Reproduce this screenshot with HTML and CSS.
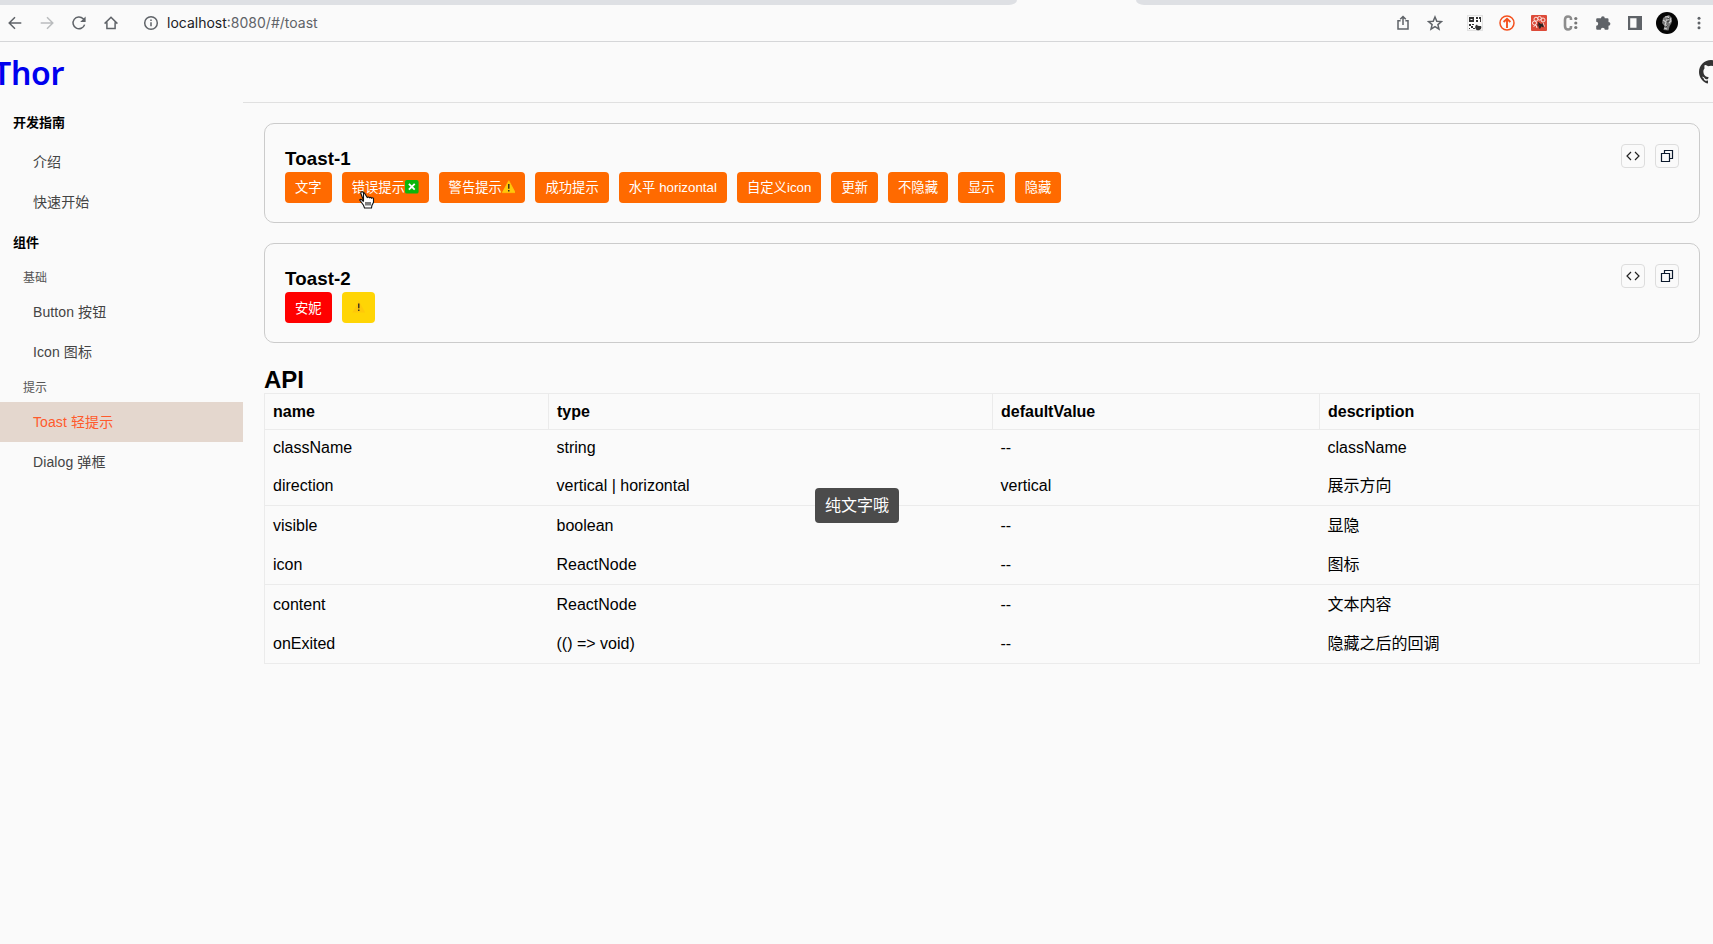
FILE: index.html
```html
<!DOCTYPE html>
<html lang="zh-CN">
	<head>
		<meta charset="utf-8">
		<title>Thor</title>
		<link rel="stylesheet" href="styles.css">
	</head>
	<body>
		<div class="browser">
			<div class="tab-strip">
				<div class="tabs-left"></div>
				<div class="tabs-right"></div>
			</div>
			<div class="toolbar">
				<svg class="tool" viewBox="0 0 16 16"><path d="M14.3 8H2.2M8 2.2 2.2 8 8 13.8"/></svg>
				<svg class="tool disabled" viewBox="0 0 16 16"><path d="M1.7 8h12.1M8 2.2 13.8 8 8 13.8"/></svg>
				<svg class="tool" viewBox="0 0 16 16"><path d="M13.6 9.6A5.9 5.9 0 1 1 12.2 3.8L13.6 5.4"/><path class="fill" d="M14.6 1.5v5.4H9.2z"/></svg>
				<svg class="tool" viewBox="0 0 16 16"><path d="M1.6 8.6 8 2.3l6.4 6.3M3.9 7.3v6.3h8.2V7.3"/></svg>
				<div class="address">
					<svg viewBox="0 0 16 16"><circle cx="8" cy="8" r="6.3"/><path d="M8 7.2v4M8 4.5v1.4"/></svg>
					<span class="host">localhost</span><span>:8080/#/toast</span>
				</div>
				<svg class="tool" viewBox="0 0 16 16"><path d="M5.6 5.7H3v8.4h10V5.7h-2.6M8 10V1.6M5.2 4.2 8 1.5l2.8 2.7"/></svg>
				<svg class="tool star" viewBox="0 0 16 16"><path d="m8 2 1.8 4.2 4.6.4-3.5 3 1.1 4.5L8 11.7l-4 2.4 1.1-4.5-3.5-3 4.6-.4z"/></svg>
				<svg class="tool" viewBox="0 0 16 16"><rect x=".5" y=".5" width="15" height="15" fill="#fff" stroke="#e2e2e2"/><path class="qr" d="M2 2h5v5H2zM9 2h2v2H9zM12 2h2v5h-1V4h-1zM9 5h2v2H9zM2 9h2v2H2zM5 9h2v1H5zM4 11h2v2H4zM2 13h1v1H2zM6 13h2v1H6zM10 9.500q0 2 4 1.500a3 3 0 1 1-4-1.500"/><path d="M3.500 4.500h2" stroke="#fff" stroke-width="1"/></svg>
				<svg class="tool" viewBox="0 0 16 16"><g stroke="#f4511e"><circle cx="8" cy="8" r="7"/><path stroke-width="1.900" d="M8 13V4M4.600 7 8 3.700 11.400 7"/></g></svg>
				<svg class="tool" viewBox="0 0 16 16"><rect width="16" height="16" rx="1" fill="#dd4b39" stroke="none"/><g stroke="#fbe3df" stroke-width="1"><circle cx="5" cy="4.200" r="2"/><circle cx="8.500" cy="3.300" r="1.800"/><circle cx="12" cy="5" r="2"/><circle cx="3.500" cy="8" r="2"/><path d="M2.500 11.500 5 10l1 3M13.500 11.500 12 8"/></g><path d="M7 7.500 12.500 12M6.500 10h5M8.500 13.500l3-5M7.500 12l5-2" stroke="#222" stroke-width="1.300"/></svg>
				<svg class="tool" viewBox="0 0 16 16"><path d="M8 5V4Q8 1.500 5 1.500T2 5v6q0 3.500 3 3.500T8 12v-1" stroke="#8d8d8d" stroke-width="2.600"/><g fill="#777" stroke="none"><circle cx="12.800" cy="3.500" r="1.600"/><circle cx="12.800" cy="8" r="1.600"/><circle cx="12.800" cy="12.500" r="1.600"/></g></svg>
				<svg class="tool" viewBox="0 0 16 16"><path class="fill" d="M6 3.200a1.900 1.900 0 0 1 3.800 0h2.700a1 1 0 0 1 1 1v2.700a1.900 1.900 0 0 1 0 3.800v3a1 1 0 0 1-1 1H9.800a2 2 0 0 0-4 0H2.200a1 1 0 0 1-1-1v-3a2 2 0 0 0 0-4V4.200a1 1 0 0 1 1-1z"/></svg>
				<svg class="tool" viewBox="0 0 16 16"><path class="fill" fill-rule="evenodd" d="M1 1h14v14H1zM3.200 3.200v9.600h6.300V3.200z"/></svg>
				<svg class="avatar" viewBox="0 0 22 22"><circle cx="11" cy="11" r="11" fill="#050505"/><path d="M9 4.500 13 3l3 3-.5 5-2 3.500-1 4-5-.5 1-4L6 11l1-5z" fill="#777"/><path d="m9 5 3-.5 1 2-3 2M7 8l3 2-1 3 3 1M14 6l1 3-2 2M8 16l3 1" fill="none" stroke="#d0d0d0" stroke-width="1.100"/><path d="m11 7 3-1M11 10l2-1M10 14.500l2-1" fill="none" stroke="#222" stroke-width=".8"/></svg>
				<svg class="tool" viewBox="0 0 16 16"><g class="fill"><circle cx="8" cy="3.200" r="1.500"/><circle cx="8" cy="8" r="1.500"/><circle cx="8" cy="12.800" r="1.500"/></g></svg>
			</div>
		</div>
		<div class="container">
			<header class="header">
				<a class="logo">Thor</a>
				<svg class="github" viewBox="0 0 16 16"><path d="M8 0C3.580 0 0 3.580 0 8c0 3.540 2.290 6.530 5.470 7.590.4.070.55-.17.55-.38 0-.19-.01-.82-.01-1.490-2.010.37-2.530-.49-2.690-.94-.09-.23-.48-.94-.82-1.130-.28-.15-.68-.52-.01-.53.63-.01 1.080.58 1.230.82.72 1.210 1.870.87 2.330.66.07-.52.28-.87.51-1.070-1.780-.2-3.640-.89-3.640-3.950 0-.87.31-1.590.82-2.150-.08-.2-.36-1.020.08-2.120 0 0 .67-.21 2.200.82a7.600 7.600 0 0 1 4 0c1.530-1.040 2.200-.82 2.200-.82.44 1.100.16 1.920.08 2.120.51.56.82 1.270.82 2.150 0 3.070-1.870 3.750-3.650 3.950.29.25.54.73.54 1.480 0 1.070-.01 1.930-.01 2.200 0 .21.15.46.55.38A8 8 0 0 0 8 0"/></svg>
			</header>
			<nav class="sidebar">
				<h4>开发指南</h4>
				<a>介绍</a>
				<a>快速开始</a>
				<h4>组件</h4>
				<h5>基础</h5>
				<a>Button 按钮</a>
				<a>Icon 图标</a>
				<h5>提示</h5>
				<a class="active">Toast 轻提示</a>
				<a>Dialog 弹框</a>
			</nav>
			<main class="content">
				<section class="card">
					<div class="card-main">
						<h3>Toast-1</h3>
						<div class="buttons">
							<button>文字</button>
							<button>错误提示<svg class="emoji" viewBox="0 0 14 14"><rect width="14" height="14" rx="2" fill="#0bb50b"/><path d="m4 4 6 6m0-6-6 6" stroke="#fff" stroke-width="1.900"/></svg>
								<svg class="cursor" viewBox="0 0 16 18"><path d="M4.500 10.500V2.200q0-1.500-1.400-1.500T1.800 2.300L4.200 8.500 4 10 2.500 8.600Q1.300 7.900.7 9l3.800 5.200 1 2.800h7l.4-2.500 1.600-3.200V7.500q-.7-1.200-1.900-.3-.7-1.300-2.200-.5-.9-1.200-2.200-.2L5.400 2Q4.400.3 2.900.9"/><path d="M7 11v3.500M9 11v3.500M11 11v3.500"/></svg></button>
							<button>警告提示<svg class="emoji" viewBox="0 0 14 14"><path d="M7 .7 13.600 13H.4z" fill="#ffc80a" stroke="#ffc80a" stroke-linejoin="round" stroke-width=".8"/><path d="M7 4v5M7 10.200v1.600" stroke="#222" stroke-width="1.400"/></svg></button>
							<button>成功提示</button>
							<button>水平 horizontal</button>
							<button>自定义icon</button>
							<button>更新</button>
							<button>不隐藏</button>
							<button>显示</button>
							<button>隐藏</button>
						</div>
					</div>
					<div class="actions">
						<span><svg viewBox="0 0 14 14"><path d="M5 3 1 7l4 4M9 3l4 4-4 4"/></svg></span>
						<span><svg class="copy" viewBox="0 0 14 14"><path d="M1.500 4.500h8v8h-8zM4.500 4.500v-3h8v8h-3"/></svg></span>
					</div>
				</section>
				<section class="card">
					<div class="card-main">
						<h3>Toast-2</h3>
						<div class="buttons">
							<button class="red">安妮</button>
							<button class="yellow"><svg class="emoji" viewBox="0 0 14 14"><path d="M7 .7 13.600 13H.4z" fill="#ffc80a"/><path d="M7 3.500v5M7 9.700v1.600" stroke="#222" stroke-width="1.300"/></svg></button>
						</div>
					</div>
					<div class="actions">
						<span><svg viewBox="0 0 14 14"><path d="M5 3 1 7l4 4M9 3l4 4-4 4"/></svg></span>
						<span><svg class="copy" viewBox="0 0 14 14"><path d="M1.500 4.500h8v8h-8zM4.500 4.500v-3h8v8h-3"/></svg></span>
					</div>
				</section>
				<h2>API</h2>
				<table class="api">
					<colgroup><col class="c-name"><col class="c-type"><col class="c-default"><col></colgroup>
					<thead>
						<tr><th>name</th><th>type</th><th>defaultValue</th><th>description</th></tr>
					</thead>
					<tbody>
						<tr class="first"><td>className</td><td>string</td><td>--</td><td>className</td></tr>
						<tr><td>direction</td><td>vertical | horizontal</td><td>vertical</td><td>展示方向</td></tr>
						<tr><td>visible</td><td>boolean</td><td>--</td><td>显隐</td></tr>
						<tr><td>icon</td><td>ReactNode</td><td>--</td><td>图标</td></tr>
						<tr><td>content</td><td>ReactNode</td><td>--</td><td>文本内容</td></tr>
						<tr><td>onExited</td><td>(() =&gt; void)</td><td>--</td><td>隐藏之后的回调</td></tr>
					</tbody>
				</table>
			</main>
		</div>
		<div class="toast">纯文字哦</div>
	</body>
</html>
```
FILE: styles.css
```css
* {
	margin: 0;
	padding: 0;
	box-sizing: border-box;
}
body {
	height: 944px;
	overflow: hidden;
	background-color: #fafafa;
	color: #000;
	font-family: "Liberation Sans", "Noto Sans CJK SC", sans-serif;
	font-size: 16px;
}

/* browser bar */
.browser {
	height: 42px;
	border-bottom: 1px solid #d5d6d8;
}
.tab-strip {
	display: flex;
	justify-content: space-between;
	height: 5px;
}
.tabs-left {
	width: 1017px;
	background-color: #dee0e4;
	border-bottom-right-radius: 8px 5px;
}
.tabs-right {
	width: 577px;
	background-color: #dee0e4;
	border-bottom-left-radius: 8px 5px;
}
.toolbar {
	display: flex;
	align-items: center;
	gap: 16px;
	height: 36px;
	padding: 0 6px 0 7px;
}
.toolbar svg {
	flex: none;
	width: 16px;
	height: 16px;
	fill: none;
	stroke: #5f6368;
	stroke-width: 1.5;
}
.toolbar .fill {
	fill: #5f6368;
	stroke: none;
}
.toolbar .qr {
	fill: #333;
	stroke: none;
}
.toolbar .disabled {
	stroke: #babcbe;
}
.toolbar .star {
	margin-right: 8px;
}
.toolbar .avatar {
	width: 22px;
	height: 22px;
	margin: 0 -3px;
	stroke: none;
}
.address {
	display: flex;
	flex: 1;
	align-items: center;
	padding-left: 8px;
	color: #5f6368;
	font-family: Inter, sans-serif;
	font-size: 14px;
	line-height: 16px;
}
.address span {
	padding-bottom: 1px;
}
.address svg {
	margin-right: 8px;
}
.address .host {
	color: #202124;
}

/* layout */
.container {
	display: grid;
	grid-template-columns: 243px 1fr;
	grid-template-rows: 60px 1fr;
}
.header {
	display: flex;
	grid-column: 1 / 3;
	align-items: center;
	justify-content: space-between;
	margin: 0 -10px 0 -7px;
}
.logo {
	color: #0000ee;
	font-family: "Noto Sans", sans-serif;
	font-size: 32px;
	font-weight: 600;
	letter-spacing: -.3px;
}
.github {
	width: 24px;
	height: 24px;
	fill: #333;
}

.sidebar h4 {
	height: 40px;
	padding-left: 13px;
	font-size: 13px;
	line-height: 41px;
}
.sidebar h5 {
	height: 30px;
	padding-left: 23px;
	color: #555;
	font-size: 12px;
	font-weight: normal;
	line-height: 32px;
}
.sidebar a {
	display: block;
	height: 40px;
	padding-left: 33px;
	color: #444;
	font-size: 14px;
	letter-spacing: .1px;
	line-height: 40px;
}
.sidebar .active {
	background-color: #e4d7ce;
	color: #ff5a2c;
}

.content {
	padding: 20px 13px 0 21px;
	border-top: 1px solid #e0e0e0;
}
.card {
	display: flex;
	justify-content: space-between;
	height: 100px;
	margin-bottom: 20.4px;
	padding: 20px;
	border: 1px solid #cbcbcb;
	border-radius: 10px;
}
.card h3 {
	height: 28px;
	font-size: 18.72px;
	letter-spacing: .1px;
	line-height: 29px;
}
.buttons {
	display: flex;
	gap: 10px;
}
.buttons button {
	position: relative;
	display: flex;
	align-items: center;
	height: 30.5px;
	padding: 0 10px 1px;
	border: none;
	border-radius: 4px;
	background-color: #ff6a00;
	color: #fff;
	font-family: inherit;
	font-size: 13.33px;
	white-space: nowrap;
}
.buttons .red {
	background-color: #ff0000;
}
.buttons .yellow {
	background-color: #ffd505;
}
.emoji {
	width: 13.6px;
	height: 13.6px;
	fill: none;
}
.cursor {
	position: absolute;
	top: 19px;
	left: 17px;
	width: 16px;
	height: 18px;
	fill: #fff;
	stroke: #111;
	stroke-width: 1.1;
}
.actions {
	display: flex;
	gap: 10px;
}
.actions span {
	display: flex;
	align-items: center;
	justify-content: center;
	width: 24px;
	height: 24px;
	border: 1px solid #ddd;
	border-radius: 4px;
}
.actions svg {
	width: 14px;
	height: 14px;
	fill: none;
	stroke: #222;
	stroke-width: 1.2;
}
.actions .copy {
	stroke: #0d1b2e;
	stroke-width: 1.2;
}

h2 {
	height: 29.2px;
	font-size: 24px;
	line-height: 31px;
}
.api {
	width: 100%;
	border: 1px solid #ebebeb;
	border-collapse: collapse;
	table-layout: fixed;
}
.c-name {
	width: 284px;
}
.c-type {
	width: 444px;
}
.c-default {
	width: 327px;
}
.api th,
.api td {
	height: 39.5px;
	padding: 1px 8px 0;
	line-height: 24px;
	text-align: left;
}
.api th {
	height: 36px;
	padding-top: 2px;
	border: 1px solid #ebebeb;
}
.api .first td {
	height: 36.5px;
}
.api tbody tr:nth-child(even) {
	border-bottom: 1px solid #ebebeb;
}

.toast {
	position: fixed;
	top: 488.4px;
	left: 815px;
	width: 84px;
	height: 35px;
	border-radius: 4px;
	background-color: #4b4b4b;
	color: #fff;
	line-height: 36px;
	text-align: center;
}
```
